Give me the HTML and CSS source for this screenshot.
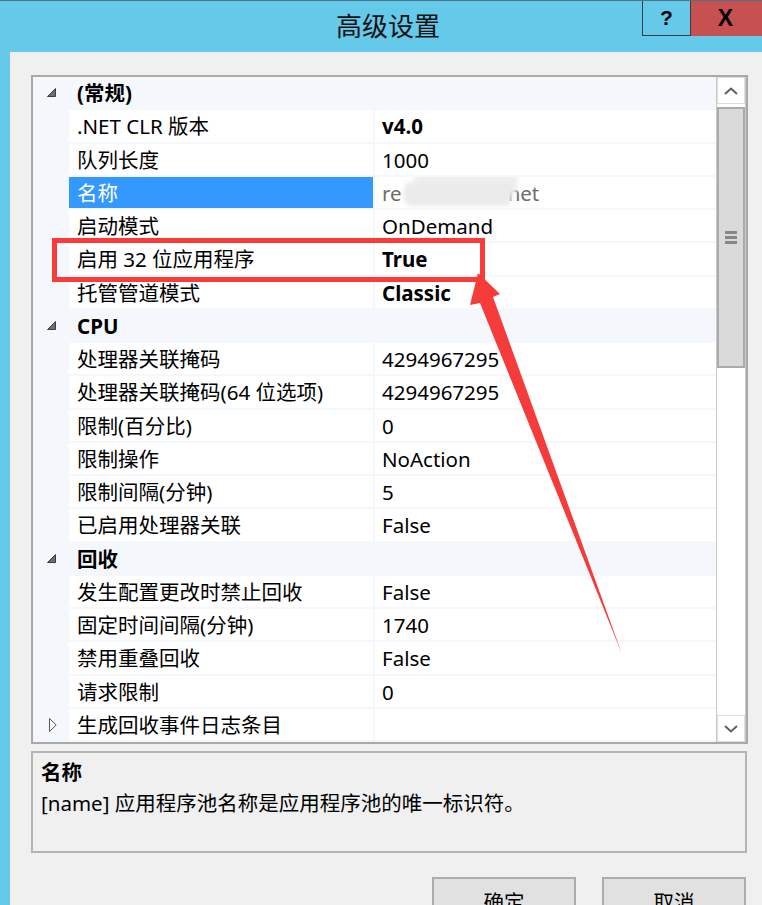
FILE: index.html
```html
<!DOCTYPE html>
<html lang="zh-CN">
<head>
<meta charset="utf-8">
<title>高级设置</title>
<link rel="stylesheet" href="styles.css">
</head>
<body>
<div class="window">
  <div class="titlebar">
    <div class="title">高级设置</div>
    <div class="caption">
      <div class="help">?</div>
      <div class="close">X</div>
    </div>
  </div>
  <div class="frame">
    <div class="client">
      <div class="grid">
        <div class="rows">
          <div class="row cat"><span class="gut"><svg class="exp" width="9" height="9" viewBox="0 0 9 9"><polygon points="8.5,0.5 8.5,8.5 0.5,8.5" fill="#6e6e6e" stroke="#3c3c3c" stroke-width="1"/></svg></span><span class="cname">(常规)</span></div>
          <div class="row"><span class="gut"></span><span class="name">.NET CLR 版本</span><span class="val b">v4.0</span></div>
          <div class="row"><span class="gut"></span><span class="name">队列长度</span><span class="val">1000</span></div>
          <div class="row sel"><span class="gut"></span><span class="name">名称</span><span class="val dim">re<span class="blur"></span>net</span></div>
          <div class="row"><span class="gut"></span><span class="name">启动模式</span><span class="val">OnDemand</span></div>
          <div class="row"><span class="gut"></span><span class="name">启用 32 位应用程序</span><span class="val b">True</span></div>
          <div class="row"><span class="gut"></span><span class="name">托管管道模式</span><span class="val b">Classic</span></div>
          <div class="row cat"><span class="gut"><svg class="exp" width="9" height="9" viewBox="0 0 9 9"><polygon points="8.5,0.5 8.5,8.5 0.5,8.5" fill="#6e6e6e" stroke="#3c3c3c" stroke-width="1"/></svg></span><span class="cname">CPU</span></div>
          <div class="row"><span class="gut"></span><span class="name">处理器关联掩码</span><span class="val">4294967295</span></div>
          <div class="row"><span class="gut"></span><span class="name">处理器关联掩码(64 位选项)</span><span class="val">4294967295</span></div>
          <div class="row"><span class="gut"></span><span class="name">限制(百分比)</span><span class="val">0</span></div>
          <div class="row"><span class="gut"></span><span class="name">限制操作</span><span class="val">NoAction</span></div>
          <div class="row"><span class="gut"></span><span class="name">限制间隔(分钟)</span><span class="val">5</span></div>
          <div class="row"><span class="gut"></span><span class="name">已启用处理器关联</span><span class="val">False</span></div>
          <div class="row cat"><span class="gut"><svg class="exp" width="9" height="9" viewBox="0 0 9 9"><polygon points="8.5,0.5 8.5,8.5 0.5,8.5" fill="#6e6e6e" stroke="#3c3c3c" stroke-width="1"/></svg></span><span class="cname">回收</span></div>
          <div class="row"><span class="gut"></span><span class="name">发生配置更改时禁止回收</span><span class="val">False</span></div>
          <div class="row"><span class="gut"></span><span class="name">固定时间间隔(分钟)</span><span class="val">1740</span></div>
          <div class="row"><span class="gut"></span><span class="name">禁用重叠回收</span><span class="val">False</span></div>
          <div class="row"><span class="gut"></span><span class="name">请求限制</span><span class="val">0</span></div>
          <div class="row"><span class="gut"><svg class="col" width="8" height="14" viewBox="0 0 8 14"><polygon points="0.5,0.5 7.2,7 0.5,13.5" fill="none" stroke="#555" stroke-width="1"/></svg></span><span class="name">生成回收事件日志条目</span><span class="val"></span></div>
        </div>
        <div class="scrollbar">
          <div class="sb-btn"><svg width="14" height="8" viewBox="0 0 14 8"><polyline points="1,7 7,1.5 13,7" fill="none" stroke="#606060" stroke-width="2"/></svg></div>
          <div class="thumb">
            <span class="grip"></span><span class="grip"></span><span class="grip"></span>
          </div>
          <div class="track"></div>
          <div class="sb-btn"><svg width="14" height="8" viewBox="0 0 14 8"><polyline points="1,1 7,6.5 13,1" fill="none" stroke="#606060" stroke-width="2"/></svg></div>
        </div>
      </div>
      <div class="desc">
        <div class="desc-title">名称</div>
        <div class="desc-text">[name] 应用程序池名称是应用程序池的唯一标识符。</div>
      </div>
      <div class="buttons">
        <div class="btn">确定</div>
        <div class="btn">取消</div>
      </div>
    </div>
  </div>
  <div class="redbox"></div>
  <svg class="arrow" width="762" height="905" viewBox="0 0 762 905">
    <polygon points="478,273 500,294 493,297 622,654 480,303 470,305" fill="#f63b3b"/>
  </svg>
</div>
</body>
</html>
```
FILE: styles.css
```css
* { box-sizing: border-box; }
html, body { margin: 0; padding: 0; }
body {
  width: 762px;
  height: 905px;
  overflow: hidden;
  font-family: "Noto Sans", "Noto Sans CJK SC", sans-serif;
  color: #000;
  background: #f0f0f0;
}
.window {
  position: relative;
  width: 762px;
  height: 905px;
  overflow: hidden;
  background: #65c9ea;
}
.titlebar {
  height: 52px;
  display: flex;
  align-items: flex-start;
  border-top: 1px solid #4d7486;
}
.title {
  margin-left: 336px;
  font-family: "Noto Sans CJK SC", sans-serif;
  font-size: 26px;
  line-height: 48px;
  color: #111;
}
.caption {
  margin-left: auto;
  display: flex;
}
.help {
  width: 49px;
  height: 35px;
  border: 1px solid #3b3b3b;
  border-top: none;
  display: flex;
  align-items: center;
  justify-content: center;
  font-family: "Liberation Sans", sans-serif;
  font-weight: bold;
  font-size: 21px;
}
.close {
  width: 71px;
  height: 35px;
  background: #c75050;
  display: flex;
  align-items: center;
  justify-content: center;
  font-family: "Liberation Sans", sans-serif;
  font-weight: bold;
  font-size: 23px;
  padding-right: 2px;
}
.frame {
  padding-left: 10px;
  height: 853px;
}
.client {
  background: #f0f0f0;
  height: 100%;
  padding: 23px 0 0 21px;
}
.grid {
  width: 717px;
  height: 669px;
  border: 2px solid #a9a9a9;
  display: flex;
  background: #fff;
}
.rows {
  flex: 1;
  background: #f4f7fc;
}
.row {
  height: 33.25px;
  display: grid;
  grid-template-columns: 34px 304px 341px;
  column-gap: 2px;
  font-size: 20.5px;
}
.row > .name,
.row > .val {
  background: #fff;
  height: 31.25px;
  line-height: 32px;
  white-space: nowrap;
  overflow: hidden;
}
.name { padding-left: 8px; }
.val { padding-left: 7px; }
.b { font-weight: bold; }
.dim { color: #6d6d6d; }
.sel > .name { background: #3399ff; color: #fff; }
.blur {
  display: inline-block;
  width: 108px;
  height: 24px;
  margin: 0 -4px 0 2px;
  vertical-align: -5px;
  background: #ebebeb;
  border-radius: 8px;
  box-shadow: 8px -10px 0 -2px #eeeeee;
  filter: blur(2px);
}
.cat .cname {
  grid-column: 2 / 4;
  font-weight: bold;
  padding-left: 8px;
  line-height: 33px;
}
.gut {
  display: flex;
  align-items: center;
  padding-left: 14px;
}
.gut .exp { margin-top: -2px; }
.gut .col { margin-left: 2px; }
.scrollbar {
  width: 30px;
  display: flex;
  flex-direction: column;
  background: #fff;
  border-left: 1px solid #c9c9c9;
  border-right: 1px solid #c9c9c9;
}
.sb-btn {
  height: 27px;
  border: 1px solid #dedede;
  display: flex;
  align-items: center;
  justify-content: center;
  background: #fff;
}
.thumb {
  margin-top: 3px;
  height: 261px;
  background: #dadada;
  border: 2px solid #ababab;
  display: flex;
  flex-direction: column;
  align-items: center;
  justify-content: center;
  gap: 2px;
}
.grip {
  display: block;
  width: 12px;
  height: 3px;
  background: #878787;
}
.track { flex: 1; }
.desc {
  width: 716px;
  height: 102px;
  margin-top: 7px;
  border: 2px solid #b4b4b4;
  padding: 4px 0 0 8px;
  font-size: 20.5px;
  line-height: 31px;
}
.desc-title { font-weight: bold; }
.buttons {
  width: 715px;
  margin-top: 24px;
  display: flex;
  justify-content: flex-end;
  gap: 26px;
}
.btn {
  width: 144px;
  height: 48px;
  border: 2px solid #adadad;
  background: #e1e1e1;
  font-size: 20.5px;
  line-height: 31px;
  padding-top: 8px;
  text-align: center;
}
.redbox {
  position: absolute;
  left: 52px;
  top: 238px;
  width: 433px;
  height: 44px;
  border: 5px solid #fb3a3a;
  pointer-events: none;
}
.arrow {
  position: absolute;
  left: 0;
  top: 0;
  pointer-events: none;
}
```
